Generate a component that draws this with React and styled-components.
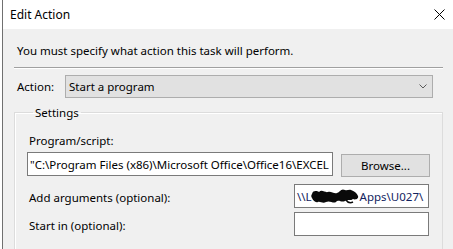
import React from "react";
import styled, { createGlobalStyle } from "styled-components";

const GlobalStyle = createGlobalStyle`
  html, body {
    margin: 0;
    padding: 0;
    background: #ffffff;
  }
  body {
    font-family: "Noto Sans", "Open Sans", sans-serif;
    font-size: 11.5px;
    color: #000;
  }
`;

const Window = styled.div`
  margin-left: 2px;
  width: 451px;
  height: 249px;
  border-left: 1px solid #707070;
  display: flex;
  flex-direction: column;
  overflow: hidden;
`;

const TitleBar = styled.div`
  height: 29px;
  flex: none;
  background: #fff;
  display: flex;
  align-items: center;
  justify-content: space-between;
  padding: 0 9px 0 7px;
`;

const Title = styled.span`
  font-size: 12px;
  line-height: 15px;
`;

const Body = styled.div`
  flex: 1;
  background: #f0f0f0;
  padding: 14px 0 0 11px;
`;

const Instruction = styled.div`
  padding-left: 3px;
  line-height: 15px;
`;

const Separator = styled.div`
  width: 429px;
  margin-top: 9px;
  height: 1px;
  background: #a0a0a0;
  border-bottom: 1px solid #ffffff;
`;

const Row = styled.div`
  display: flex;
  align-items: center;
  margin-top: ${(p) => p.$top || 0}px;
  padding-left: ${(p) => p.$left || 0}px;
`;

const Label = styled.span`
  line-height: 15px;
  width: ${(p) => (p.$width ? `${p.$width}px` : "auto")};
  padding-top: ${(p) => p.$drop || 0}px;
  flex: none;
`;

const Combo = styled.div`
  width: 368px;
  height: 23px;
  box-sizing: border-box;
  background: #e1e1e1;
  border: 1px solid #adadad;
  display: flex;
  align-items: center;
  justify-content: space-between;
  padding: 0 5px 0 3px;
`;

const GroupBox = styled.fieldset`
  width: 429px;
  box-sizing: border-box;
  margin: 7px 0 0 0;
  padding: 0 0 0 12px;
  border: 1px solid #dcdcdc;
  box-shadow: inset 1px 1px 0 #fff;
  height: 160px;
`;

const Legend = styled.legend`
  margin-left: 6px;
  padding: 0 2px;
  line-height: 15px;
`;

const FieldLabel = styled.div`
  margin: 13px 0 0 2px;
  line-height: 15px;
`;

const TextBox = styled.div`
  width: ${(p) => p.$width}px;
  height: 24px;
  box-sizing: border-box;
  background: #fff;
  border: 1px solid #7a7a7a;
  display: flex;
  align-items: center;
  padding-left: 2px;
  overflow: hidden;
  white-space: nowrap;
  color: ${(p) => p.$color || "#000"};
`;

const Button = styled.button`
  width: 89px;
  height: 23px;
  margin-top: 2px;
  background: #e1e1e1;
  border: 1px solid #adadad;
  font-family: inherit;
  font-size: 11.5px;
  color: #000;
  padding: 0;
`;

const InputRow = styled.div`
  display: flex;
  align-items: flex-start;
  gap: 8px;
  margin-top: ${(p) => p.$top || 0}px;
`;

const ArgRow = styled.div`
  display: flex;
  align-items: center;
  margin-top: ${(p) => p.$top}px;
  padding-left: 2px;
`;

function CloseIcon() {
  return (
    <svg width="11" height="11" viewBox="0 0 11 11">
      <path d="M0.5 0.5 L10.5 10.5 M10.5 0.5 L0.5 10.5" stroke="#000" strokeWidth="1" fill="none" />
    </svg>
  );
}

function Chevron() {
  return (
    <svg width="8" height="5" viewBox="0 0 8 5">
      <path d="M0.5 0.5 L4 4 L7.5 0.5" stroke="#5a5a5a" strokeWidth="1" fill="none" />
    </svg>
  );
}

// redaction mark drawn over part of the path
function Scribble() {
  return (
    <svg width="50" height="18" viewBox="0 0 50 18" style={{ flex: "none", marginLeft: -2 }}>
      <path
        d="M2 7 C3 3 7 4 9 5 C12 2 15 6 18 5 C21 4 24 7 27 6 C30 5 31 1 35 3 C37 4 39 2 41 3 C44 4 47 6 48 9 C49 12 45 13 43 12 C41 14 38 12 35 14 C31 16 29 12 26 15 C23 17 20 13 16 15 C13 17 10 14 8 15 C5 16 3 13 2 11 C1 10 1 8 2 7 Z"
        fill="#0a0a0a"
      />
      <path d="M36 13 C38 16 41 16 43 15" stroke="#0a0a0a" strokeWidth="1.5" fill="none" />
    </svg>
  );
}

export default function App() {
  return (
    <>
      <GlobalStyle />
      <Window>
        <TitleBar>
          <Title>Edit Action</Title>
          <CloseIcon />
        </TitleBar>
        <Body>
          <Instruction>You must specify what action this task will perform.</Instruction>
          <Separator />
          <Row $top={6} $left={3}>
            <Label $width={48}>Action:</Label>
            <Combo>
              <span>Start a program</span>
              <Chevron />
            </Combo>
          </Row>
          <GroupBox>
            <Legend>Settings</Legend>
            <FieldLabel>Program/script:</FieldLabel>
            <InputRow $top={4}>
              <TextBox $width={306}>"C:\Program Files (x86)\Microsoft Office\Office16\EXCEL</TextBox>
              <Button>Browse...</Button>
            </InputRow>
            <ArgRow $top={7}>
              <Label $width={265} $drop={2}>Add arguments (optional):</Label>
              <TextBox $width={135} $color="#12235e">
                \\L<Scribble />Apps\U027\
              </TextBox>
            </ArgRow>
            <ArgRow $top={4}>
              <Label $width={265} $drop={3}>Start in (optional):</Label>
              <TextBox $width={135} />
            </ArgRow>
          </GroupBox>
        </Body>
      </Window>
    </>
  );
}
